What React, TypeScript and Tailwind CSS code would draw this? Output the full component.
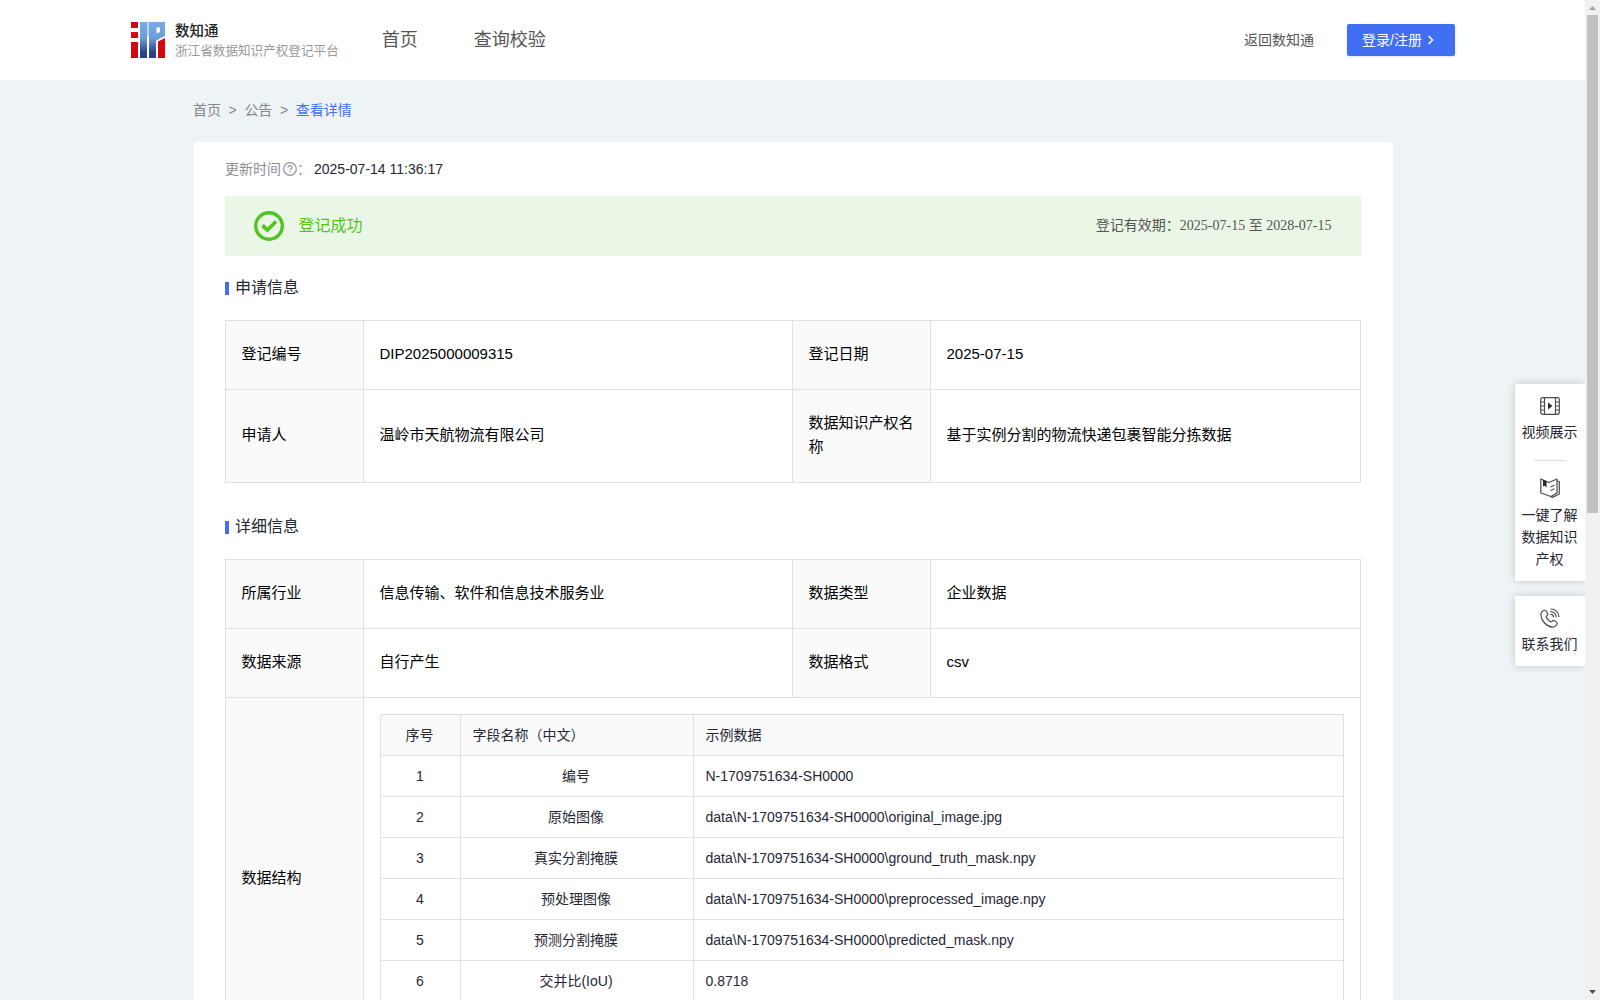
import { ReactNode } from "react";

const fields = [
  { name: "编号", sample: "N-1709751634-SH0000" },
  { name: "原始图像", sample: "data\\N-1709751634-SH0000\\original_image.jpg" },
  { name: "真实分割掩膜", sample: "data\\N-1709751634-SH0000\\ground_truth_mask.npy" },
  { name: "预处理图像", sample: "data\\N-1709751634-SH0000\\preprocessed_image.npy" },
  { name: "预测分割掩膜", sample: "data\\N-1709751634-SH0000\\predicted_mask.npy" },
  { name: "交并比(IoU)", sample: "0.8718" },
];

function Logo() {
  return (
    <svg width="34" height="36" viewBox="0 0 34 36">
      <defs>
        <linearGradient id="logoBlue" x1="0" y1="0" x2="0" y2="36" gradientUnits="userSpaceOnUse">
          <stop offset="0" stopColor="#79ace4" />
          <stop offset="0.45" stopColor="#6c9cd8" />
          <stop offset="0.85" stopColor="#2b4289" />
          <stop offset="1" stopColor="#2a3f86" />
        </linearGradient>
      </defs>
      <rect width="7" height="6" fill="#d20a10" />
      <rect y="10" width="7" height="6" fill="#d20a10" />
      <rect y="20" width="7" height="16" fill="#d20a10" />
      <rect x="9" width="7" height="36" fill="url(#logoBlue)" />
      <rect x="16" width="2" height="36" fill="#b9d3f0" />
      <rect x="16" y="14" width="2" height="22" fill="#fff" />
      <path d="M18 0H34V14L25 18.500V36H18Z" fill="url(#logoBlue)" />
      <path d="M25.500 5.500H29V10L25.500 11.500Z" fill="#fff" />
      <path d="M27 19.500L34 16V36H27Z" fill="#d20a10" />
    </svg>
  );
}

function VideoIcon() {
  return (
    <svg width="20" height="20" viewBox="0 0 20 20" fill="none" stroke="#4a4a52" strokeWidth="1.200">
      <rect x="0.700" y="1.700" width="18.600" height="16.600" rx="2" />
      <path d="M4.500 1.700V18.300M15.500 1.700V18.300M0.700 6H4.500M0.700 10H4.500M0.700 14H4.500M15.500 6H19.300M15.500 10H19.300M15.500 14H19.300" />
      <path d="M8 6.500L12.500 10L8 13.500Z" fill="#26262e" stroke="none" />
    </svg>
  );
}

function BookIcon() {
  return (
    <svg width="20" height="20" viewBox="0 0 20 20" fill="none" stroke="#4a4a52" strokeWidth="1.200" strokeLinejoin="round">
      <path d="M0.800 1L9 4.500L17 1V15L11 18.500L0.800 15Z" />
      <path d="M17 3L19.300 3.500V16L12.500 19.400L10 18.300" />
      <path d="M10.500 9L14.500 7.300M10.500 12.500L14.500 10.800" />
      <path d="M3 1.800L6.500 3.200V9.500L4.700 7.800L3 8.500Z" fill="#26262e" stroke="none" />
    </svg>
  );
}

function PhoneIcon() {
  return (
    <svg width="20" height="20" viewBox="0 0 20 20" fill="none" stroke="#4a4a52" strokeWidth="1.200" strokeLinecap="round" strokeLinejoin="round">
      <path d="M4.500 2C3 2.300 0.700 4.500 0.900 7.500C1.300 12.500 6.500 18.700 12.500 19.100C15 19.200 17 17 17.200 15.500C17.300 14.500 14.500 12.500 13.500 12.400C12.500 12.300 12 14 11 13.900C9.500 13.700 6.300 10.300 6.200 8.900C6.200 8 7.900 7.500 7.800 6.500C7.700 5 5.800 1.800 4.500 2Z" />
      <path d="M11 1C15 0.800 18.800 4.500 18.900 8.500M10.800 3.700C13.500 3.600 16 6 16.200 8.700M10.800 6.300C12.200 6.300 13.400 7.500 13.500 8.800" />
    </svg>
  );
}

function SectionTitle({ children }: { children: ReactNode }) {
  return (
    <div className="flex h-6 items-center text-base text-[#272733]">
      <span className="mt-0.5 mr-1.5 h-[13px] w-1 bg-[#416ff4]" />
      <span className="pt-px">{children}</span>
    </div>
  );
}

function Row({ cells }: { cells: string[] }) {
  return (
    <tr>
      {cells.map((cell, i) => (
        <td key={i} className={`border border-[#e0e0e0] pt-[21px] pr-4 pb-[23px] pl-[15.5px] align-middle ${i % 2 === 0 ? "bg-[#fafafa]" : ""}`}>
          {cell}
        </td>
      ))}
    </tr>
  );
}

function InfoTable({ children }: { children: ReactNode }) {
  return (
    <table className="w-[1136px] table-fixed border-collapse text-[15px] leading-6 text-black">
      <colgroup>
        <col className="w-[138px]" />
        <col className="w-[429px]" />
        <col className="w-[138px]" />
        <col />
      </colgroup>
      <tbody>{children}</tbody>
    </table>
  );
}

function FieldTable() {
  return (
    <table className="w-[964px] table-fixed border-collapse text-sm leading-5 text-[#272733]">
      <colgroup>
        <col className="w-20" />
        <col className="w-[233px]" />
        <col />
      </colgroup>
      <thead>
        <tr className="h-[41px] bg-[#fafafa]">
          <th className="border border-[#e0e0e0] pr-0.5 pb-px font-normal">序号</th>
          <th className="border border-[#e0e0e0] px-[11.5px] pb-px text-left font-normal">字段名称（中文）</th>
          <th className="border border-[#e0e0e0] px-[11.5px] pb-px text-left font-normal">示例数据</th>
        </tr>
      </thead>
      <tbody>
        {fields.map((field, i) => (
          <tr key={field.name} className="h-[41px]">
            <td className="border border-[#e0e0e0] pr-px text-center">{i + 1}</td>
            <td className="border border-[#e0e0e0] pr-0.5 text-center">{field.name}</td>
            <td className="border border-[#e0e0e0] px-[11.5px]">{field.sample}</td>
          </tr>
        ))}
      </tbody>
    </table>
  );
}

export default function App() {
  return (
    <div className="flex h-screen w-[1600px] overflow-hidden bg-[#eef3f6] font-['Liberation_Sans','Noto_Sans_CJK_SC',sans-serif]">
      <div className="relative w-[1585px] overflow-hidden">
        {/* Header */}
        <header className="flex h-20 items-center bg-white pl-[131px]">
          <Logo />
          <div className="ml-2.5 pt-0.5 whitespace-nowrap">
            <div className="text-[14.5px] leading-5 font-medium text-[#222]">数知通</div>
            <div className="text-[12.6px] leading-5 text-[#999]">浙江省数据知识产权登记平台</div>
          </div>
          <nav className="ml-[43px] flex gap-14 text-lg text-[#555]">
            <a>首页</a>
            <a>查询校验</a>
          </nav>
          <a className="mr-[33px] ml-auto pb-px text-sm text-[#555]">返回数知通</a>
          <button className="mr-[130px] flex h-8 w-[108px] items-center rounded-xs bg-[#416ff4] pb-px pl-[15px] text-sm text-white shadow-sm">
            登录/注册
            <svg className="ml-[5px]" width="8" height="10" viewBox="0 0 8 10" fill="none" stroke="#fff" strokeWidth="1.500">
              <path d="M1.500 1L5.500 5L1.500 9" />
            </svg>
          </button>
        </header>

        <main className="ml-[193px] w-[1200px]">
          <div className="flex h-[62px] items-center gap-[7.6px] pb-0.5 text-sm text-[#86868c]">
            <span>首页</span>
            <span>&gt;</span>
            <span>公告</span>
            <span>&gt;</span>
            <span className="text-[#416ff4]">查看详情</span>
          </div>

          <div className="h-[1000px] rounded-t bg-white px-8 pt-4">
            <div className="flex h-[22px] items-center pb-px text-sm text-[#8f8f96]">
              更新时间
              <svg className="ml-0.5" width="14" height="14" viewBox="0 0 14 14" fill="none" stroke="#95959b" strokeWidth="1.200">
                <circle cx="7" cy="7" r="6.300" />
                <path d="M5 5.600C5 3 9 3 9 5.400C9 6.800 7 6.800 7 8.300M7 9.300V10.600" />
              </svg>
              <span className="w-[17px]">：</span>
              <span className="text-[#272733]">2025-07-14 11:36:17</span>
            </div>

            {/* Status */}
            <div className="mt-4 flex h-[60px] items-center bg-[#ebf7e6] pr-[29.5px] pl-[29px]">
              <svg width="30" height="30" viewBox="0 0 30 30" fill="none" stroke="#4fc41d">
                <circle cx="15" cy="15" r="13.300" strokeWidth="3.400" />
                <path d="M8.500 14.500L13.500 19L22 10.500" strokeWidth="3.700" />
              </svg>
              <span className="ml-[14.5px] text-base text-[#52c41a]">登记成功</span>
              <span className="ml-auto font-['Liberation_Serif','Noto_Sans_CJK_SC',serif] text-sm text-[#555]">
                登记有效期：2025-07-15 至 2028-07-15
              </span>
            </div>

            <div className="mt-[19px] mb-[21px]">
              <SectionTitle>申请信息</SectionTitle>
            </div>
            <InfoTable>
              <Row cells={["登记编号", "DIP2025000009315", "登记日期", "2025-07-15"]} />
              <Row cells={["申请人", "温岭市天航物流有限公司", "数据知识产权名称", "基于实例分割的物流快递包裹智能分拣数据"]} />
            </InfoTable>

            <div className="mt-[31px] mb-[21px]">
              <SectionTitle>详细信息</SectionTitle>
            </div>
            <InfoTable>
              <Row cells={["所属行业", "信息传输、软件和信息技术服务业", "数据类型", "企业数据"]} />
              <Row cells={["数据来源", "自行产生", "数据格式", "csv"]} />
              <tr className="h-[362px]">
                <td className="border border-[#e0e0e0] bg-[#fafafa] pr-4 pb-0.5 pl-[15.5px] align-middle">数据结构</td>
                <td colSpan={3} className="border border-[#e0e0e0] px-4 pt-4 align-top">
                  <FieldTable />
                </td>
              </tr>
            </InfoTable>
          </div>
        </main>

        {/* Side toolbar */}
        <aside className="absolute top-[384px] right-0 flex w-[70px] flex-col gap-[15px] text-center text-sm leading-[22px] text-[#272733]">
          <div className="flex h-[197px] flex-col items-center bg-white pt-3 shadow-[0_0_8px_rgba(0,0,0,0.18)]">
            <VideoIcon />
            <div className="mt-[5px] pr-px">视频展示</div>
            <div className="mt-[17px] h-px w-8 bg-[#dcdcdc]" />
            <div className="mt-[17px]">
              <BookIcon />
            </div>
            <div className="mt-1.5 mr-px w-14">一键了解数据知识产权</div>
          </div>
          <div className="flex h-[70px] flex-col items-center bg-white pt-3 shadow-[0_0_8px_rgba(0,0,0,0.18)]">
            <PhoneIcon />
            <div className="mt-[5px] pr-px">联系我们</div>
          </div>
        </aside>
      </div>

      {/* Scrollbar */}
      <div className="flex w-[15px] flex-col items-center bg-[#f1f1f1]">
        <svg width="15" height="15" viewBox="0 0 15 15">
          <path d="M4 10L7.500 6L11 10Z" fill="#a3a3a3" />
        </svg>
        <div className="h-[498px] w-[11px] bg-[#c1c1c1]" />
        <svg className="mt-auto" width="15" height="15" viewBox="0 0 15 15">
          <path d="M4 5L7.500 9L11 5Z" fill="#505050" />
        </svg>
      </div>
    </div>
  );
}
